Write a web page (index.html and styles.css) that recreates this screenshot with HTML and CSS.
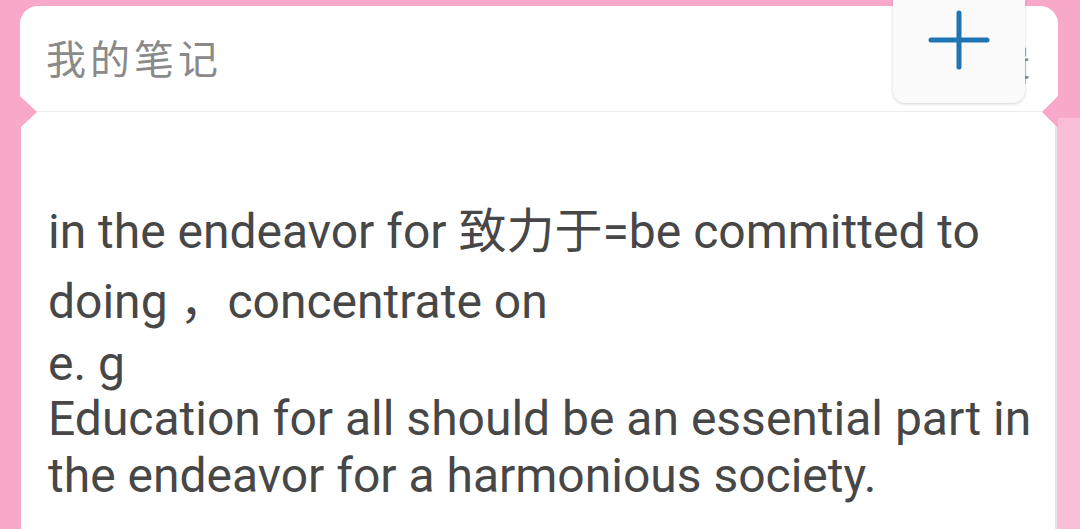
FILE: index.html
```html
<!DOCTYPE html>
<html>
<head>
<meta charset="utf-8">
<link rel="stylesheet" href="styles.css">
</head>
<body>
<div class="screen">
  <div class="header">
    <span class="title">我的笔记</span>
    <span class="peek">辑</span>
    <div class="addbtn">
      <svg width="64" height="64" viewBox="0 0 64 64"><path d="M32 5V59M4 32H60" stroke="#1f74b4" stroke-width="5" stroke-linecap="round" fill="none"/></svg>
    </div>
  </div>
  <div class="bodyrow">
    <div class="note">
      <div class="line l1">in the endeavor for 致力于=be committed to</div>
      <div class="line l2">doing ，concentrate on</div>
      <div class="line l3">e. g</div>
      <div class="line l4">Education for all should be an essential part in</div>
      <div class="line l5">the endeavor for a harmonious society.</div>
    </div>
    <div class="side"></div>
  </div>
  <div class="notch notch-left"></div>
  <div class="notch notch-right"></div>
</div>
</body>
</html>
```

FILE: styles.css
```css
html, body {
  margin: 0;
  padding: 0;
}
body {
  width: 1080px;
  height: 529px;
  overflow: hidden;
  background: #f8a8c9;
  font-family: Roboto, "Noto Sans CJK SC", sans-serif;
}
.screen {
  position: relative;
  width: 1080px;
  height: 529px;
  padding-top: 6px;
  box-sizing: border-box;
  display: flex;
  flex-direction: column;
}
.header {
  position: relative;
  margin-left: 20px;
  width: 1038px;
  height: 106px;
  background: #ffffff;
  border-radius: 18px 18px 0 0;
  border-bottom: 1px solid #ececec;
  box-sizing: border-box;
  display: flex;
  align-items: center;
}
.title {
  margin-left: 26px;
  margin-top: -3px;
  font-family: "Noto Sans CJK SC", sans-serif;
  font-size: 40px;
  letter-spacing: 4px;
  color: #8a8a8a;
}
.peek {
  position: absolute;
  left: 970px;
  top: 28px;
  font-family: "Noto Sans CJK SC", sans-serif;
  font-size: 40px;
  color: #8a8a8a;
}
.addbtn {
  position: absolute;
  left: 873px;
  top: -6px;
  width: 132px;
  height: 103px;
  background: #fafafa;
  border-radius: 0 0 12px 12px;
  box-shadow: 0 1px 3px rgba(0,0,0,0.18);
  display: flex;
  justify-content: center;
  padding-top: 8px;
  box-sizing: border-box;
  z-index: 2;
}
.bodyrow {
  flex: 1;
  display: flex;
}
.note {
  margin-left: 21px;
  width: 1036px;
  background: #ffffff;
  border-right: 2px solid #e6e6e6;
  box-sizing: border-box;
  padding: 84px 0 0 27px;
  color: #474747;
  font-size: 48px;
  white-space: nowrap;
}
.side {
  flex: 1;
  margin-top: 6px;
  background: #f9bdd8;
}
.l1 { line-height: 72px; }
.l2 { line-height: 68px; }
.l3 { line-height: 56px; }
.l4 { line-height: 54px; }
.l5 { line-height: 60px; }
.notch {
  position: absolute;
  width: 0;
  height: 0;
  border-top: 16px solid transparent;
  border-bottom: 16px solid transparent;
  z-index: 3;
}
.notch-left {
  left: 20px;
  top: 96px;
  border-left: 17px solid #f8a8c9;
}
.notch-right {
  left: 1042px;
  top: 96px;
  border-right: 16px solid #f8a8c9;
}
```
